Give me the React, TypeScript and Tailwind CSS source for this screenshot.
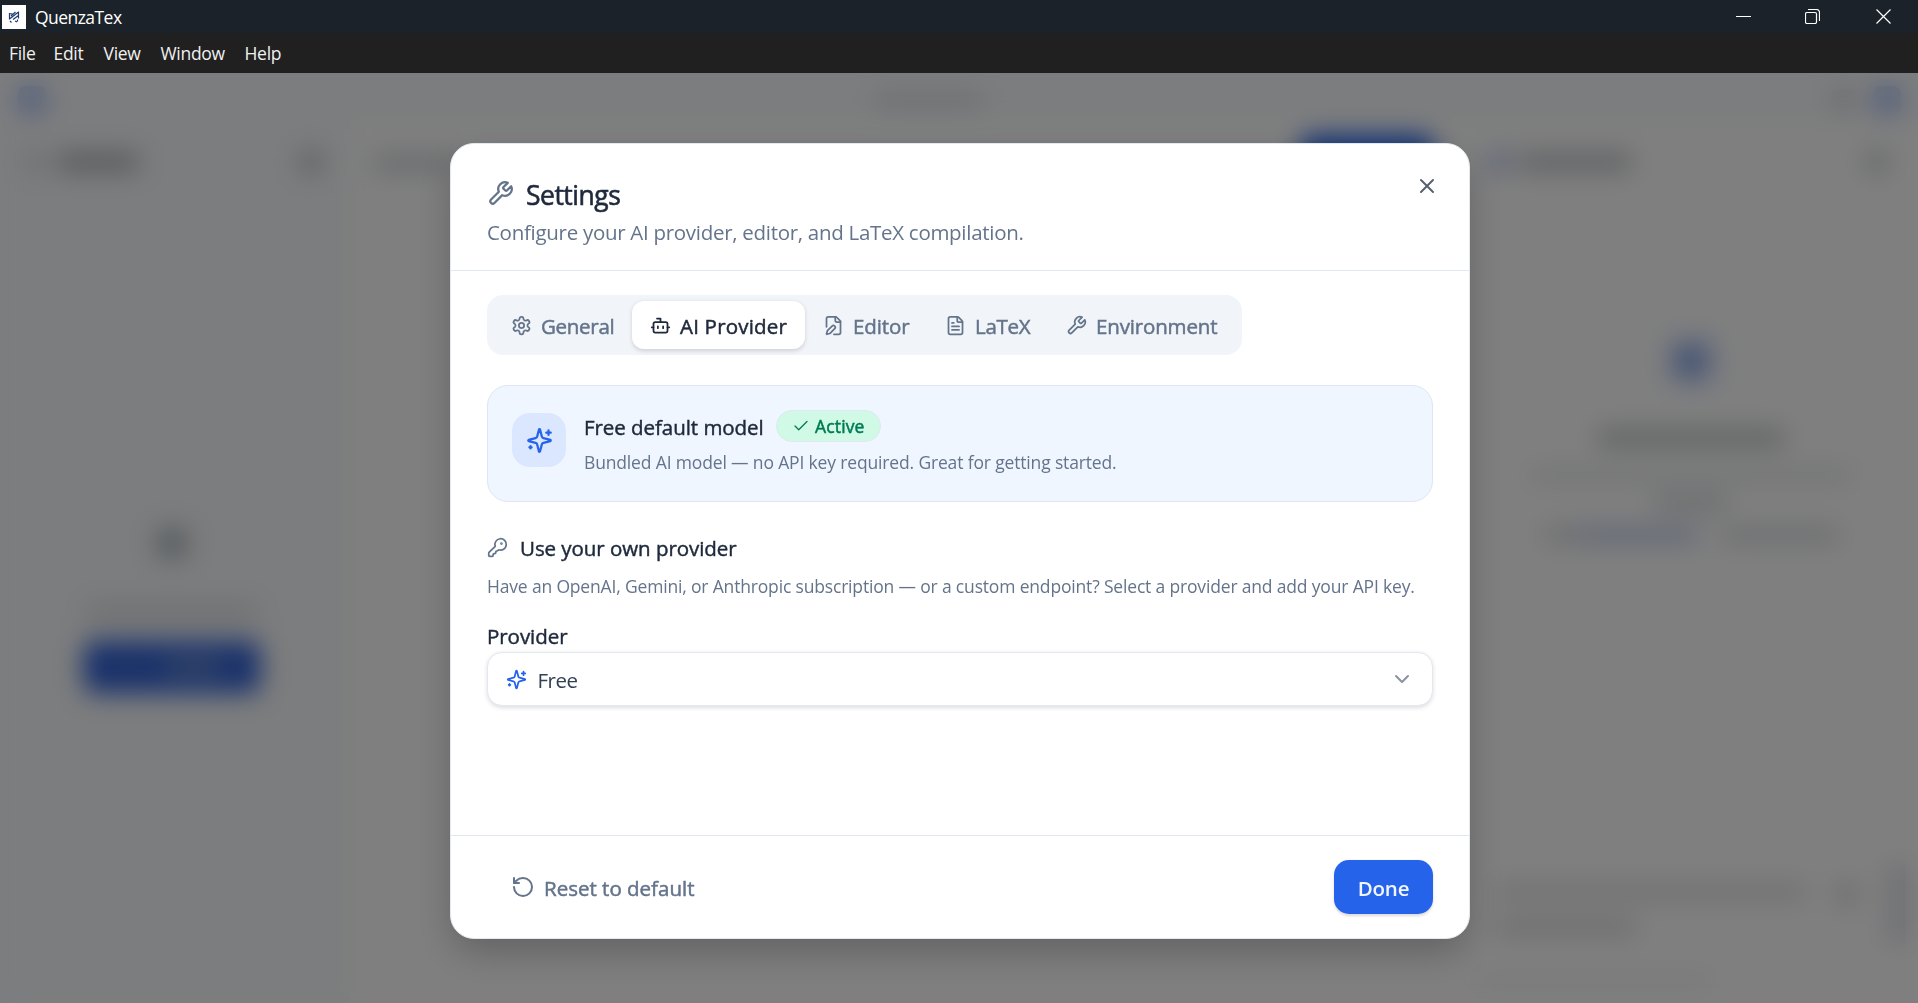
import type { ComponentType, ReactNode } from "react";
import { Bot, Check, ChevronDown, FileText, KeyRound, RotateCcw, X } from "lucide-react";

interface IconProps {
  className?: string;
}

interface Tab {
  label: string;
  icon: ComponentType<IconProps>;
  active?: boolean;
  className: string;
}

function Icon({ className, children }: IconProps & { children: ReactNode }) {
  return (
    <svg
      viewBox="0 0 24 24"
      fill="none"
      stroke="currentColor"
      strokeWidth="2"
      strokeLinecap="round"
      strokeLinejoin="round"
      className={className}
    >
      {children}
    </svg>
  );
}

function WrenchIcon({ className }: IconProps) {
  return (
    <Icon className={className}>
      <path d="M14.7 6.3a1 1 0 0 0 0 1.4l1.6 1.6a1 1 0 0 0 1.4 0l3.77-3.77a6 6 0 0 1-7.94 7.94l-6.91 6.91a2.12 2.12 0 0 1-3-3l6.91-6.91a6 6 0 0 1 7.94-7.94l-3.76 3.76z" />
    </Icon>
  );
}

function GearIcon({ className }: IconProps) {
  return (
    <Icon className={className}>
      <path d="M12.22 2h-.44a2 2 0 0 0-2 2v.18a2 2 0 0 1-1 1.73l-.43.25a2 2 0 0 1-2 0l-.15-.08a2 2 0 0 0-2.73.73l-.22.38a2 2 0 0 0 .73 2.73l.15.1a2 2 0 0 1 1 1.72v.51a2 2 0 0 1-1 1.74l-.15.09a2 2 0 0 0-.73 2.73l.22.38a2 2 0 0 0 2.73.73l.15-.08a2 2 0 0 1 2 0l.43.25a2 2 0 0 1 1 1.73V20a2 2 0 0 0 2 2h.44a2 2 0 0 0 2-2v-.18a2 2 0 0 1 1-1.73l.43-.25a2 2 0 0 1 2 0l.15.08a2 2 0 0 0 2.73-.73l.22-.39a2 2 0 0 0-.73-2.73l-.15-.08a2 2 0 0 1-1-1.74v-.5a2 2 0 0 1 1-1.74l.15-.09a2 2 0 0 0 .73-2.73l-.22-.38a2 2 0 0 0-2.73-.73l-.15.08a2 2 0 0 1-2 0l-.43-.25a2 2 0 0 1-1-1.73V4a2 2 0 0 0-2-2z" />
      <circle cx="12" cy="12" r="3" />
    </Icon>
  );
}

function FilePenIcon({ className }: IconProps) {
  return (
    <Icon className={className}>
      <path d="M12.5 22H18a2 2 0 0 0 2-2V7l-5-5H6a2 2 0 0 0-2 2v9.5" />
      <path d="M14 2v4a2 2 0 0 0 2 2h4" />
      <path d="M13.378 15.626a1 1 0 1 0-3.004-3.004l-5.01 5.012a2 2 0 0 0-.506.854l-.837 2.87a.5.5 0 0 0 .62.62l2.87-.837a2 2 0 0 0 .854-.506z" />
    </Icon>
  );
}

function SparklesIcon({ className }: IconProps) {
  return (
    <Icon className={className}>
      <path d="M9.937 15.5A2 2 0 0 0 8.5 14.063l-6.135-1.582a.5.5 0 0 1 0-.962L8.5 9.936A2 2 0 0 0 9.937 8.5l1.582-6.135a.5.5 0 0 1 .963 0L14.063 8.5A2 2 0 0 0 15.5 9.937l6.135 1.581a.5.5 0 0 1 0 .964L15.5 14.063a2 2 0 0 0-1.437 1.437l-1.582 6.135a.5.5 0 0 1-.963 0z" />
      <path d="M20 3v4M22 5h-4M4 17v2M5 18H3" />
    </Icon>
  );
}

const menus = [
  { label: "File", width: "w-[44.5px]" },
  { label: "Edit", width: "w-[50px]" },
  { label: "View", width: "w-[57px]" },
  { label: "Window", width: "w-[84px]" },
  { label: "Help", width: "w-[50px]" },
];

const tabs: Tab[] = [
  { label: "General", icon: GearIcon, className: "w-[139px] tracking-[-0.3px]" },
  { label: "AI Provider", icon: Bot, active: true, className: "w-[173px] tracking-[0.2px]" },
  { label: "Editor", icon: FilePenIcon, className: "w-[122px] tracking-[-0.1px]" },
  { label: "LaTeX", icon: FileText, className: "w-[121px] tracking-[-0.3px]" },
  { label: "Environment", icon: WrenchIcon, className: "w-[188px] tracking-[-0.15px]" },
];

function AppLogo() {
  return (
    <div className="flex h-6 w-6 items-center justify-center bg-white">
      <svg width="12" height="12" viewBox="0 0 12 12" fill="none" stroke="#1e3a6e" strokeWidth="1.2">
        <path d="M1.500 2v6.500M1.500 2.500l3 .5M10.500 0.500v7M10.500 1L1.500 8M7.500 1L3 5M10.500 4.500L5 8.500M2 10l1.500 1.500M7 10l2 1M9.500 8.500v2" />
      </svg>
    </div>
  );
}

function TitleBar() {
  return (
    <div className="flex h-[33px] shrink-0 items-center bg-[#1b2229] pl-[2px] text-white">
      <AppLogo />
      <span className="ml-[9px] pt-[2px] text-[17.5px] tracking-[-0.55px]">QuenzaTex</span>
      <div className="ml-auto flex items-center pr-[27px]">
        <svg width="15" height="15" viewBox="0 0 15 15" stroke="white" className="mr-[54px]">
          <path d="M0 7.500h15" />
        </svg>
        <svg width="15" height="15" viewBox="0 0 15 15" fill="none" stroke="white" strokeWidth="1.200" className="mr-14">
          <rect x="0.500" y="3.500" width="11" height="11" rx="1.500" />
          <path d="M3 0.500h8.500a3 3 0 0 1 3 3V12" />
        </svg>
        <svg width="15" height="15" viewBox="0 0 15 15" stroke="white" strokeWidth="1.200">
          <path d="M0.500 0.500l14 14M14.500 0.500l-14 14" />
        </svg>
      </div>
    </div>
  );
}

function MenuBar() {
  return (
    <div className="flex h-10 shrink-0 items-center bg-[#202020] pt-px pl-[9px] text-[17.5px] tracking-[-0.3px] text-[#f0f0f0]">
      {menus.map((menu) => (
        <span key={menu.label} className={menu.width}>
          {menu.label}
        </span>
      ))}
    </div>
  );
}

// Workspace placeholder, only seen blurred behind the dialog
function Workspace() {
  return (
    <div className="flex h-full flex-col bg-white">
      <div className="flex h-[48px] shrink-0 items-center justify-between bg-[#f8fafc] pt-1.5 pl-[18px] pr-[17px]">
        <div className="h-7 w-7 rounded-lg bg-[#a8c0f8]" />
        <div className="-ml-[22px] h-4 w-[108px] bg-[#dcdfe4]" />
        <div className="flex items-center gap-5">
          <div className="h-5 w-5 bg-[#cfd3d8]" />
          <div className="h-7 w-7 rounded-lg bg-[#a8c0f8]" />
        </div>
      </div>
      <div className="flex min-h-0 flex-1">
        <div className="flex w-[350px] flex-col bg-[#f8fafc]">
          <div className="flex h-[82px] items-center pl-[26px] pr-[29px]">
            <div className="h-5 w-4 bg-[#d4d8dc]" />
            <div className="ml-4 h-4 w-[80px] bg-[#a4a8ae]" />
            <div className="ml-auto h-5 w-5 bg-[#b4b9c0]" />
          </div>
          <div className="flex flex-col items-center pt-[324px] pr-[7px]">
            <div className="h-8 w-8 rounded-lg bg-[#b4bdc4]" />
            <div className="mt-[45px] h-4 w-[172px] bg-[#dcdedf]" />
            <div className="mt-[20px] h-[54px] w-[178px] rounded-xl bg-[#4a72cf] p-[3px]">
              <div className="flex h-full items-center gap-8 rounded-xl bg-[#3464d8] px-9">
                <div className="h-4 w-4 bg-[#4a72c0]" />
                <div className="h-4 w-[80px] bg-[#7090cc]" />
              </div>
            </div>
          </div>
        </div>
        <div className="flex-1 pt-[14px]">
          <div className="flex justify-between pl-6 pr-[30px]">
            <div className="mt-[20px] h-4 w-[84px] bg-[#d0d3d8]" />
            <div className="h-[54px] w-[134px] rounded-xl bg-[#2563eb]" />
          </div>
        </div>
        <div className="flex w-[454px] flex-col">
          <div className="flex h-[82px] items-center pl-[27px] pr-[31px]">
            <div className="h-5 w-4 bg-[#a8b8ee]" />
            <div className="ml-3 h-4 w-[112px] bg-[#b8bbc0]" />
            <div className="ml-auto h-5 w-5 bg-[#c2c6cc]" />
          </div>
          <div className="flex flex-col items-center pt-[130px]">
            <div className="flex h-14 w-14 items-center justify-center rounded-xl bg-[#e8effd]">
              <div className="h-8 w-8 rounded-lg bg-[#86a4e6]" />
            </div>
            <div className="mt-[41px] h-4 w-[186px] bg-[#bcbfc1]" />
            <div className="mt-[23px] h-3 w-[320px] bg-[#e2e4e7]" />
            <div className="mt-[16px] h-3 w-[74px] bg-[#c8ccd0]" />
            <div className="mt-[20px] flex">
              <div className="h-3 w-[34px] bg-[#cdd0d4]" />
              <div className="h-3 w-[120px] bg-[#b4c0e8]" />
              <div className="ml-6 h-3 w-[116px] bg-[#cdd0d4]" />
            </div>
          </div>
          <div className="mt-auto flex pb-4 pl-[32px] pr-[12px]">
            <div>
              <div className="h-4 w-[310px] bg-[#dfe0e4]" />
              <div className="mt-[19px] h-4 w-[140px] bg-[#d8d9dd]" />
              <div className="mt-[40px] -ml-5 h-3 w-[235px] bg-[#f0f1f2]" />
            </div>
            <div className="ml-[31px] h-5 w-5 bg-[#d2d4d8]" />
            <div className="ml-auto -mt-5 h-[80px] w-[18px] bg-[#dcdee6]" />
          </div>
        </div>
      </div>
    </div>
  );
}

function SettingsDialog() {
  return (
    <div className="flex h-[796px] w-[1020px] flex-col rounded-3xl border border-[#e2e8f0] bg-white text-[#1e293b] shadow-[0_15px_38px_-4px_rgba(0,0,0,0.25)]">
      <div className="flex h-[127px] shrink-0 justify-between border-b border-[#e2e8f0] pl-9 pr-[30px]">
        <div className="pt-[33px]">
          <div className="flex items-center gap-3">
            <WrenchIcon className="-mt-[3px] h-[27px] w-[27px] text-[#64748b]" />
            <h2 className="text-[26.5px] leading-9 tracking-[-0.5px] [-webkit-text-stroke:0.6px]">Settings</h2>
          </div>
          <p className="mt-[4px] text-[20.5px] leading-[30px] tracking-[-0.29px] text-[#64748b]">
            Configure your AI provider, editor, and LaTeX compilation.
          </p>
        </div>
        <X className="mt-[30px] h-6 w-6 text-[#575f6e]" />
      </div>

      <div className="flex-1 px-9 pt-6">
        <div className="flex h-[60px] w-[755px] items-center rounded-2xl bg-[#f1f5f9] p-1.5">
          {tabs.map(({ label, icon: TabIcon, active, className }) => (
            <div
              key={label}
              className={`flex h-12 items-center rounded-xl pl-[18px] text-[20.5px] whitespace-nowrap [-webkit-text-stroke:0.5px] ${className} ${
                active ? "bg-white shadow-[0_1.500px_4px_rgba(0,0,0,0.15)]" : "text-[#64748b]"
              }`}
            >
              <TabIcon className="mr-[9px] h-[21px] w-[21px] shrink-0" />
              <span className="pt-[2px]">{label}</span>
            </div>
          ))}
        </div>

        <div className="mt-[30px] flex h-[117px] rounded-[21px] border border-[#dfe6f2] bg-[#eff6ff] pl-6 pt-6">
          <div className="mt-[3px] flex h-[54px] w-[54px] items-center justify-center rounded-[18px] bg-[#dbe7fe]">
            <SparklesIcon className="h-[27px] w-[27px] text-[#2563eb]" />
          </div>
          <div className="ml-[18px]">
            <div className="flex h-8 items-center">
              <h3 className="w-[192px] pt-[2px] text-[20.5px] tracking-[-0.05px] [-webkit-text-stroke:0.45px]">
                Free default model
              </h3>
              <span className="flex h-8 w-[105px] items-center rounded-full border border-[#dfe9ee] bg-[#d0fae5] pl-[15px] text-[17.5px] tracking-[0.15px] text-[#007a55] [-webkit-text-stroke:0.5px]">
                <Check className="mr-[5px] h-[18px] w-[18px] [-webkit-text-stroke:0]" strokeWidth={1.75} />
                <span className="pt-px">Active</span>
              </span>
            </div>
            <p className="mt-[7px] text-[17.5px] leading-[27px] tracking-[-0.155px] text-[#64748b]">
              Bundled AI model — no API key required. Great for getting started.
            </p>
          </div>
        </div>

        <div className="mt-[30px] flex h-8 items-center gap-3">
          <KeyRound className="-mt-px h-[21px] w-[21px] text-[#64748b]" />
          <h3 className="pt-px text-[20.5px] tracking-[-0.05px] [-webkit-text-stroke:0.45px]">Use your own provider</h3>
        </div>
        <p className="mt-[9px] text-[17.5px] leading-[27px] tracking-[-0.17px] text-[#64748b] whitespace-nowrap">
          Have an OpenAI, Gemini, or Anthropic subscription — or a custom endpoint? Select a provider and add your API
          key.
        </p>

        <div className="mt-[21px] text-[20.5px] leading-[31px] tracking-[-0.05px] [-webkit-text-stroke:0.45px]">
          Provider
        </div>
        <div className="flex h-[54px] items-center rounded-[15px] border border-[#e2e8f0] bg-white pr-[18px] pl-[17.5px] shadow-[0_1.500px_4px_rgba(0,0,0,0.13)]">
          <SparklesIcon className="h-[21px] w-[21px] text-[#2563eb]" />
          <span className="ml-[11px] pt-[2px] text-[20.5px] tracking-[-0.5px] text-[#334155]">Free</span>
          <ChevronDown className="ml-auto h-6 w-6 text-[#8b93a0]" />
        </div>
      </div>

      <div className="flex h-[103px] shrink-0 items-center justify-between border-t border-[#e2e8f0] px-9">
        <button className="flex items-center pl-6 text-[20.5px] text-[#64748b] [-webkit-text-stroke:0.5px]">
          <RotateCcw className="mr-[9px] h-6 w-6" />
          <span className="pt-[2px]">Reset to default</span>
        </button>
        <button className="h-[54px] w-[99px] rounded-[15px] bg-[#2563eb] pt-[3px] text-[20.5px] font-semibold tracking-[-0.2px] text-[#eff6ff] shadow-[0_1.500px_3px_rgba(0,0,0,0.15)]">
          Done
        </button>
      </div>
    </div>
  );
}

export default function App() {
  return (
    <div className="flex h-[1003px] w-[1918px] flex-col overflow-hidden font-['Open_Sans',sans-serif]">
      <TitleBar />
      <MenuBar />
      <div className="relative min-h-0 flex-1 overflow-hidden">
        <Workspace />
        <div className="absolute inset-0 flex items-start justify-center bg-black/50 pt-[70px] pl-[2px] backdrop-blur-[13px]">
          <SettingsDialog />
        </div>
      </div>
    </div>
  );
}
